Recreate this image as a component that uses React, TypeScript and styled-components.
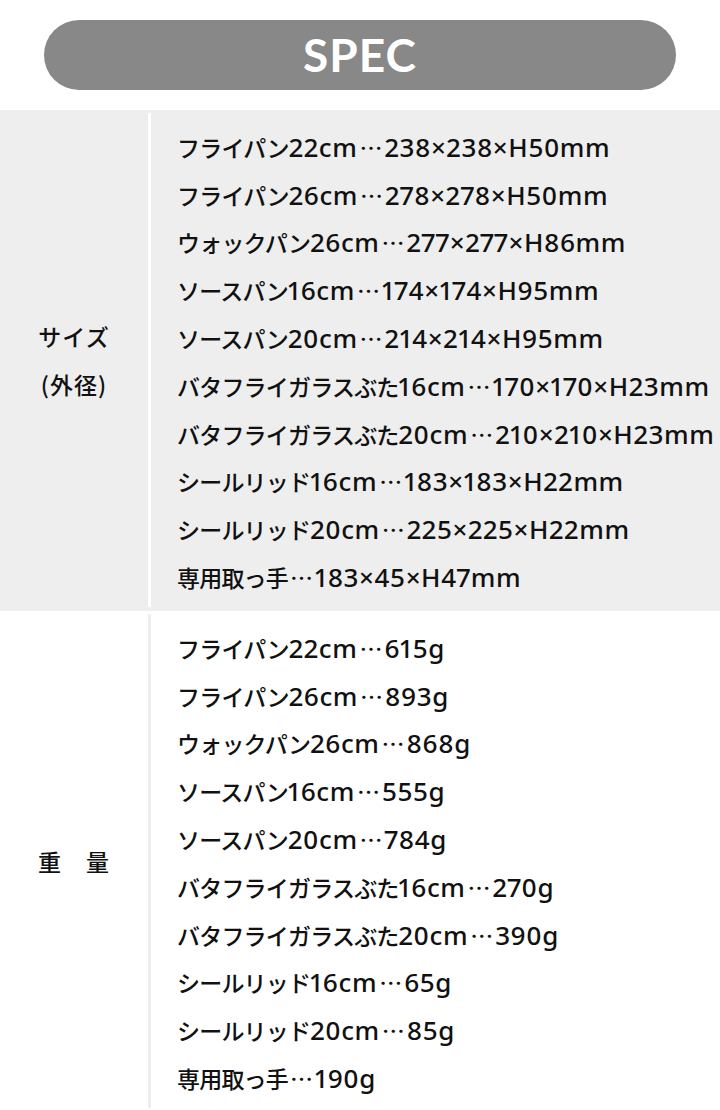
import styled, { createGlobalStyle } from "styled-components";

const GlobalStyle = createGlobalStyle`
  body {
    margin: 0;
    background: #ffffff;
    font-family: "Noto Sans CJK JP", "Noto Sans", sans-serif;
    color: #111111;
  }
`;

type Spec = {
  label: string[];
  rows: string[];
  shaded?: boolean;
};

const specs: Spec[] = [
  {
    label: ["サイズ", "(外径)"],
    shaded: true,
    rows: [
      "フライパン22cm…238×238×H50mm",
      "フライパン26cm…278×278×H50mm",
      "ウォックパン26cm…277×277×H86mm",
      "ソースパン16cm…174×174×H95mm",
      "ソースパン20cm…214×214×H95mm",
      "バタフライガラスぶた16cm…170×170×H23mm",
      "バタフライガラスぶた20cm…210×210×H23mm",
      "シールリッド16cm…183×183×H22mm",
      "シールリッド20cm…225×225×H22mm",
      "専用取っ手…183×45×H47mm",
    ],
  },
  {
    label: ["重　量"],
    rows: [
      "フライパン22cm…615g",
      "フライパン26cm…893g",
      "ウォックパン26cm…868g",
      "ソースパン16cm…555g",
      "ソースパン20cm…784g",
      "バタフライガラスぶた16cm…270g",
      "バタフライガラスぶた20cm…390g",
      "シールリッド16cm…65g",
      "シールリッド20cm…85g",
      "専用取っ手…190g",
    ],
  },
];

// split a row into kana/kanji, latin and ellipsis runs so each gets its own metrics
const splitRow = (text: string) =>
  text
    .split(/(…|[A-Za-z0-9×]+)/)
    .filter(Boolean)
    .map((part, i) => {
      if (part === "…") return <Dots key={i}>…</Dots>;
      if (/^[A-Za-z0-9×]+$/.test(part)) return <Latin key={i}>{part}</Latin>;
      return <Kana key={i}>{part}</Kana>;
    });

const App = () => {
  return (
    <Page lang="ja">
      <GlobalStyle />
      <Header>
        <Title>SPEC</Title>
      </Header>
      {specs.map((spec) => (
        <Section key={spec.label[0]} $shaded={spec.shaded}>
          <Label>
            {spec.label.map((line) => (
              <span key={line}>{line}</span>
            ))}
          </Label>
          <Divider $shaded={spec.shaded} />
          <Rows>
            {spec.rows.map((row) => (
              <Row key={row}>{splitRow(row)}</Row>
            ))}
          </Rows>
        </Section>
      ))}
    </Page>
  );
};

export default App;

const Page = styled.div`
  width: 720px;
  padding-top: 20px;
`;

const Header = styled.div`
  margin: 0 44px 20px;
  height: 70px;
  border-radius: 35px;
  background: #888888;
  display: flex;
  align-items: center;
  justify-content: center;
`;

const Title = styled.h1`
  margin: 0;
  font-family: Lato, "Open Sans", sans-serif;
  font-weight: 700;
  font-size: 46px;
  letter-spacing: 1px;
  color: #ffffff;
  line-height: 1;
`;

const Section = styled.div<{ $shaded?: boolean }>`
  display: grid;
  grid-template-columns: 148px 3px 1fr;
  background: ${(p) => (p.$shaded ? "#eeeeee" : "#ffffff")};
`;

const Label = styled.div`
  display: flex;
  flex-direction: column;
  align-items: center;
  justify-content: center;
  font-size: 23px;
  font-weight: 500;
  line-height: 48px;
  letter-spacing: 1px;
`;

const Divider = styled.div<{ $shaded?: boolean }>`
  background: ${(p) => (p.$shaded ? "#ffffff" : "#eeeeee")};
  margin: 3px 0 4px;
`;

const Rows = styled.div`
  display: flex;
  flex-direction: column;
  padding: 13px 0 10px 26px;
`;

const Row = styled.div`
  height: 47.8px;
  display: flex;
  align-items: center;
  white-space: nowrap;
`;

const Kana = styled.span`
  font-family: "Noto Sans CJK JP", sans-serif;
  font-size: 23px;
  font-weight: 500;
  letter-spacing: -0.8px;
`;

const Latin = styled.span`
  font-family: "Noto Sans", "Liberation Sans", sans-serif;
  font-size: 26px;
  font-weight: 500;
  letter-spacing: 0.6px;
  font-variant-numeric: proportional-nums;
`;

const Dots = styled.span`
  display: inline-block;
  font-family: "Noto Sans CJK JP", sans-serif;
  font-size: 23px;
  font-weight: 500;
  font-feature-settings: "fwid" 1;
  margin: 0 2px;
`;
